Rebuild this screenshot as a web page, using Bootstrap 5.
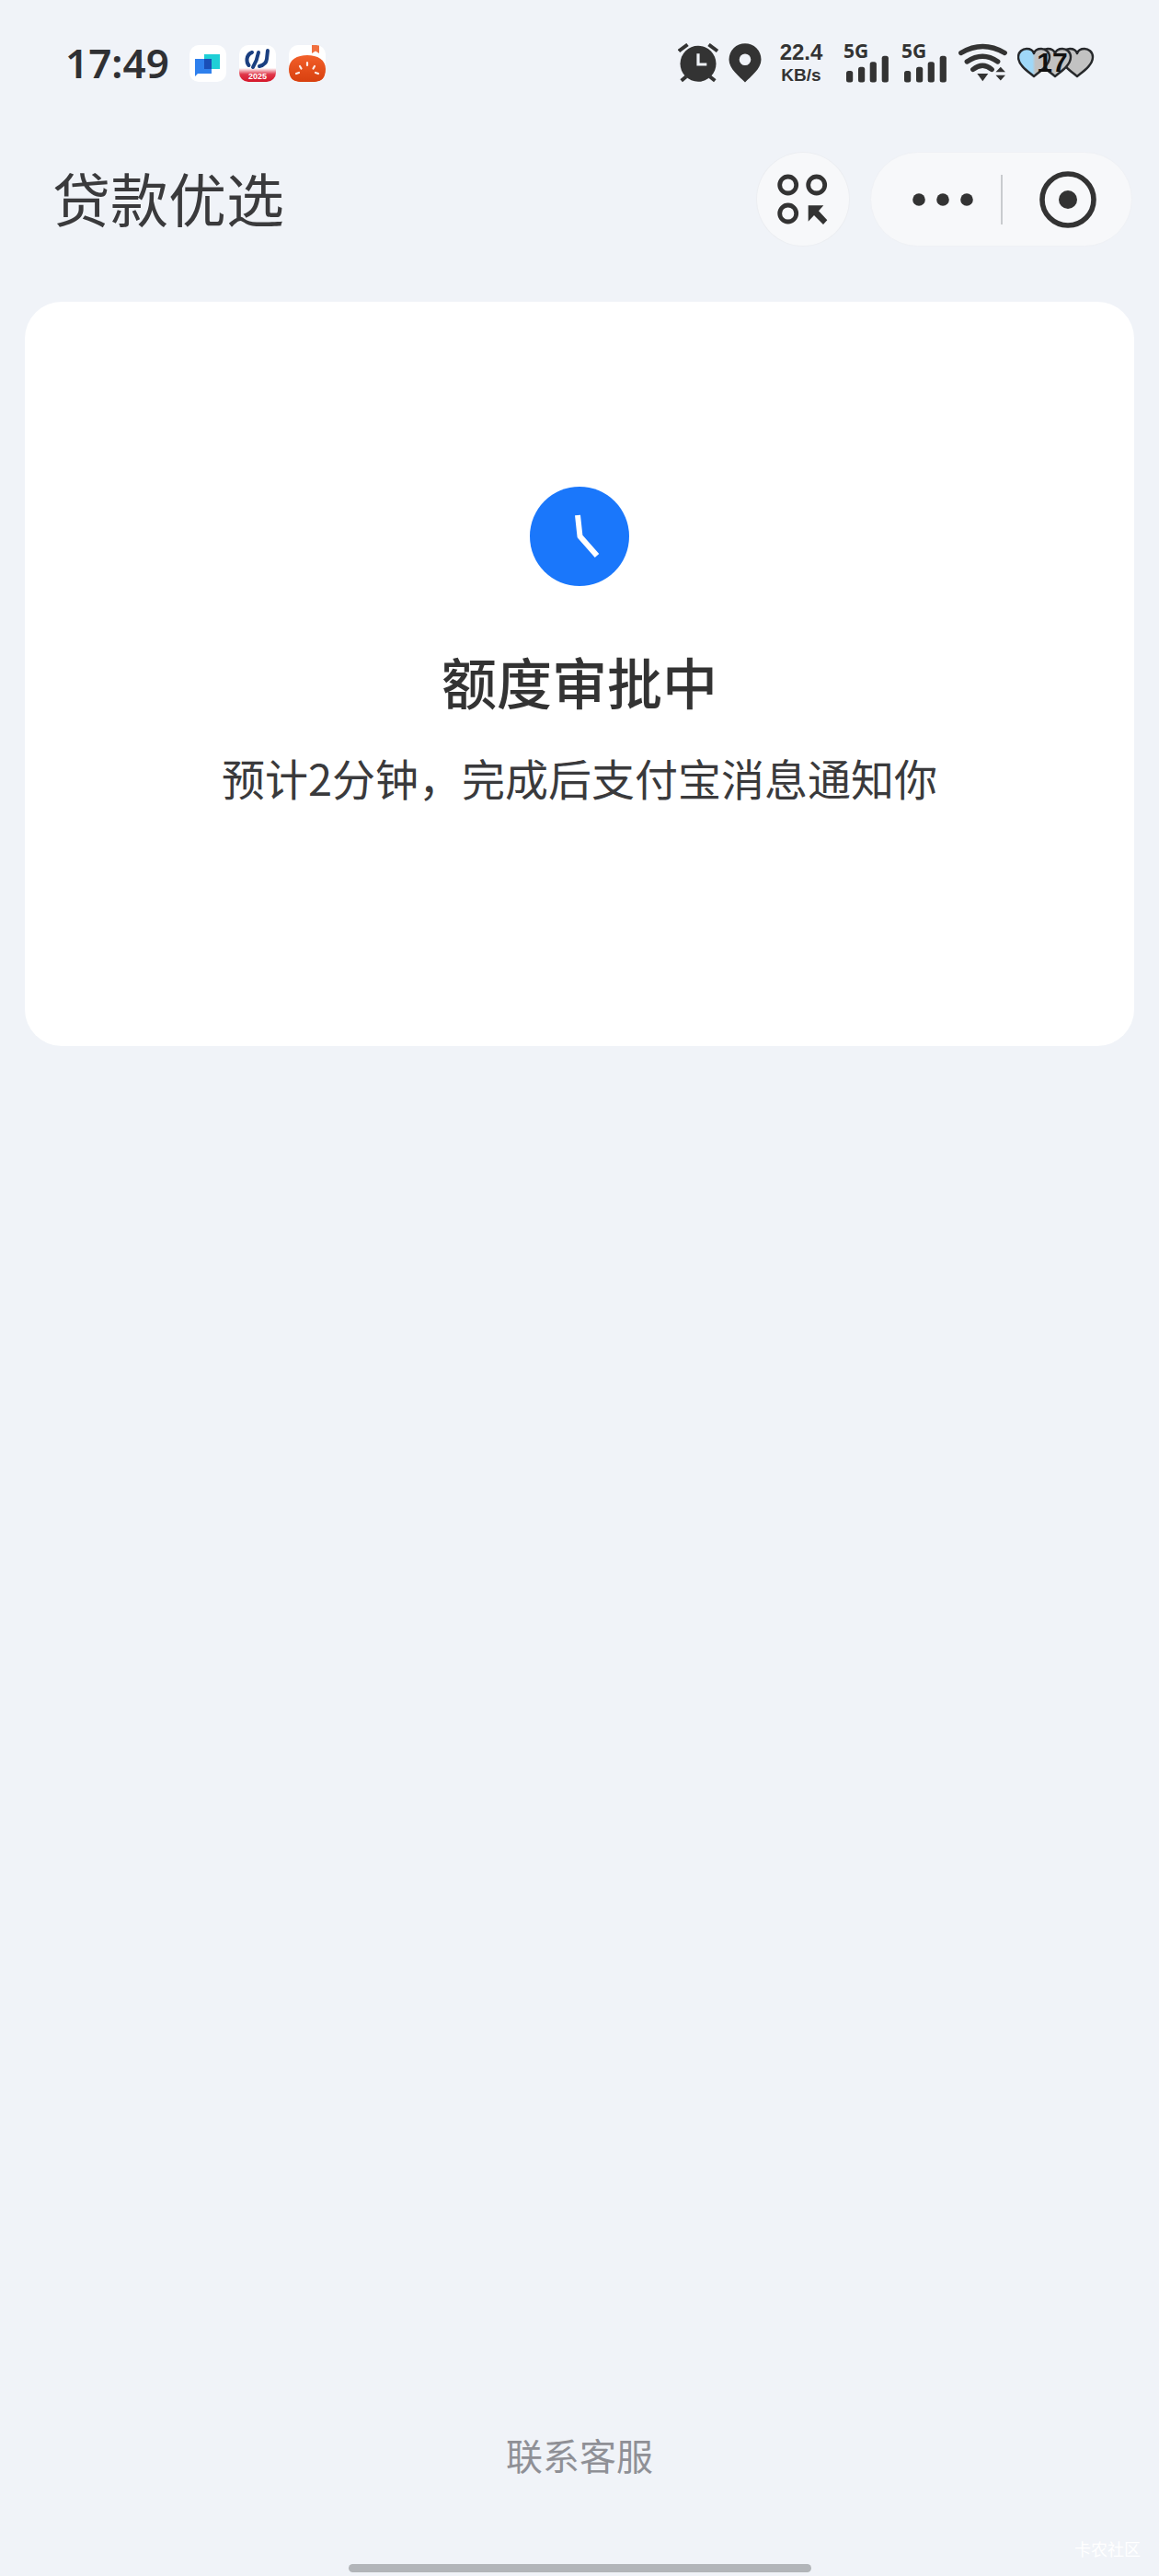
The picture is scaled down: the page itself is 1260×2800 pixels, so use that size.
<!DOCTYPE html>
<html lang="zh-CN">
<head>
  <meta charset="UTF-8" />
  <meta name="viewport" content="width=device-width, initial-scale=1.0"/>
  <title>贷款优选</title>
  <link href="https://cdn.jsdelivr.net/npm/bootstrap@5.3.0/dist/css/bootstrap.min.css" rel="stylesheet"/>
  <style>
    body {
      background: #f0f3f8;
      color: #333;
      font-family: "Noto Sans CJK SC", "Noto Sans", sans-serif;
    }
    .page-wrap { width: 1260px; height: 2800px; }

    /* status bar */
    .status-bar { height: 43px; margin-top: 47px; padding-left: 71px; }
    .clock-time { font: 600 44px/41px "Noto Sans", sans-serif; width: 115px; margin-right: 20px; color: #2f3033; }
    .app-icon { width: 40px; height: 40px; border-radius: 10px; background: #fff; margin-right: 14px; overflow: hidden; }
    .status-right { margin-left: auto; margin-right: 69px; width: 454px; color: #333; }
    .status-right svg { flex: none; }
    .ic-pin { margin-left: 10px; }
    .speed-box { width: 52px; margin-left: 17px; margin-right: 20px; font-family: "Liberation Sans", sans-serif; font-weight: 700; text-align: center; }
    .speed-num { font-size: 24px; line-height: 23px; }
    .speed-unit { font-size: 19px; line-height: 23px; margin-top: 2px; }
    .sig-box { width: 52px; height: 43px; flex: none; }
    .sig-label { display: block; font: 700 21px/17px "Noto Sans", sans-serif; margin-bottom: -4px; }
    .sig-bars { display: block; }
    .sig-two { margin-left: 11px; }
    .ic-wifi { margin-left: 10px; }
    .ic-hearts { margin-left: 11px; }

    /* mini program nav */
    .top-nav { height: 103px; margin-top: 75px; padding: 0 29px 0 57px; }
    .nav-title { font-size: 63px; line-height: 99px; font-weight: 400; color: #3a3a3c; margin: 0 0 6px; }
    .scan-btn { width: 102px; height: 103px; background: #f7f8fa; border: 1px solid #eceef2; margin-right: 22px; }
    .capsule-btn { width: 285px; height: 103px; background: #f7f8fa; border: 1px solid #eff1f5; }
    .dots-ic { margin-left: 45px; }
    .capsule-line { width: 1.5px; height: 54px; background: #c9cbce; margin-left: 30px; margin-right: 40px; }

    /* status card */
    .status-card { margin: 60px 27px 0; height: 809px; border-radius: 40px; background: #fff; padding-top: 201px; }
    .clock-ic { margin-bottom: 59px; }
    .card-head { font-size: 60px; line-height: 88px; font-weight: 500; color: #333; margin: 0 0 26px; }
    .card-sub { font-size: 47px; line-height: 70px; color: #3a3a3c; margin: 0; }

    .service-link { font-size: 40px; line-height: 60px; color: #8f9096; margin-bottom: 89px; }
    .home-bar { width: 503px; height: 9px; border-radius: 5px; background: #b2b5b9; margin-bottom: 4px; }
    .watermark { position: absolute; right: 20px; bottom: 20px; font-size: 18px; line-height: 20px; color: #fff; }
  </style>
</head>
<body>

<div class="page-wrap d-flex flex-column position-relative">

  <!-- Status bar -->
  <div class="status-bar d-flex align-items-center">
    <div class="clock-time">17:49</div>

    <div class="app-icon">
      <svg width="40" height="40" viewBox="0 0 40 40">
        <path d="M16 10h17v16h-3v-0H16z" fill="#1fcfd6"/>
        <path d="M6 15h18v16H9l-3 3z" fill="#2f80ed"/>
        <rect x="16" y="15" width="8" height="11" fill="#1a4fb8"/>
      </svg>
    </div>
    <div class="app-icon">
      <svg width="40" height="40" viewBox="0 0 40 40">
        <defs>
          <linearGradient id="bandRed" x1="0" y1="0" x2="0" y2="1">
            <stop offset="0" stop-color="#fff"/>
            <stop offset=".45" stop-color="#e0374a"/>
            <stop offset="1" stop-color="#d5162a"/>
          </linearGradient>
        </defs>
        <rect x="0" y="25" width="40" height="15" fill="url(#bandRed)"/>
        <g fill="none" stroke="#1b3f80" stroke-width="4" stroke-linecap="round">
          <path d="M14 8C11 9 9 12 8.500 15c-.3 3 0 5 2 7"/>
          <path d="M21 8c-1 6-3 11-6 16"/>
          <path d="M31 6l-1 9c-.5 5-4 7-8 8"/>
        </g>
        <text x="20" y="37" text-anchor="middle" font-size="9" font-weight="700" fill="#fff" font-family="Liberation Sans, sans-serif">2025</text>
      </svg>
    </div>
    <div class="app-icon">
      <svg width="40" height="40" viewBox="0 0 40 40">
        <defs>
          <linearGradient id="domeRed" x1="0" y1="0" x2="0" y2="1">
            <stop offset="0" stop-color="#f2602a"/>
            <stop offset="1" stop-color="#d8400f"/>
          </linearGradient>
        </defs>
        <path d="M25 0h8v9l-4-2.500L25 9z" fill="#f0703f"/>
        <path d="M0 26C0 16 9 11 20 11s20 5 20 15c0 9-4 14-12 14H12C4 40 0 35 0 26z" fill="url(#domeRed)"/>
        <g stroke="#fff" stroke-width="2.200" stroke-linecap="round" opacity=".9">
          <path d="M20 19v3"/><path d="M12 23l1.500 2.500"/><path d="M28 23l-1.500 2.500"/><path d="M8 31l3-1"/><path d="M32 31l-3-1"/>
        </g>
      </svg>
    </div>

    <div class="status-right d-flex align-items-center">
      <!-- alarm -->
      <svg width="45" height="43" viewBox="0 0 45 43">
        <circle cx="22" cy="22.300" r="19.500" fill="#333"/>
        <g stroke="#333" stroke-width="4" fill="none">
          <path d="M1 8.500 10.500 1.500"/><path d="M33.500 1.500 43 8.500"/>
          <path d="M3.700 40.700 9 36.300"/><path d="M40.300 40.700 34.700 36.300"/>
        </g>
        <path d="M22 11.300V23h9.300" stroke="#f0f3f8" stroke-width="3.200" fill="none"/>
      </svg>
      <!-- location -->
      <svg class="ic-pin" width="36" height="43" viewBox="0 0 36 43">
        <path fill-rule="evenodd" fill="#333" d="M18 42.500C12 36 .5 28 .5 17.700a17.500 17.500 0 0 1 35 0C35.500 28 24 36 18 42.500zM18 11.400a6.300 6.300 0 1 0 0 12.600 6.300 6.300 0 0 0 0-12.600z"/>
      </svg>
      <div class="speed-box">
        <div class="speed-num">22.4</div>
        <div class="speed-unit">KB/s</div>
      </div>
      <!-- signal 1 -->
      <div class="sig-box">
        <span class="sig-label">5G</span>
        <svg class="sig-bars" width="52" height="30" viewBox="0 13 52 30">
          <g fill="#333">
            <rect x="3" y="30" width="7.200" height="12.500" rx="2.500"/>
            <rect x="16" y="25.700" width="7.200" height="16.800" rx="2.500"/>
            <rect x="28.700" y="20.300" width="7.200" height="22.200" rx="2.500"/>
            <rect x="41.700" y="13.700" width="7.200" height="28.800" rx="2.500"/>
          </g>
        </svg>
      </div>
      <!-- signal 2 -->
      <div class="sig-box sig-two">
        <span class="sig-label">5G</span>
        <svg class="sig-bars" width="52" height="30" viewBox="0 13 52 30">
          <g fill="#333">
            <rect x="3" y="30" width="7.200" height="12.500" rx="2.500"/>
            <rect x="16" y="25.700" width="7.200" height="16.800" rx="2.500"/>
            <rect x="28.700" y="20.300" width="7.200" height="22.200" rx="2.500"/>
            <rect x="41.700" y="13.700" width="7.200" height="28.800" rx="2.500"/>
          </g>
        </svg>
      </div>
      <!-- wifi -->
      <svg class="ic-wifi" width="53" height="43" viewBox="0 0 53 43">
        <g fill="none" stroke="#333" stroke-width="5.400" stroke-linecap="round">
          <path d="M2.800 10.500Q26.300-3.500 50.200 10.500"/>
          <path d="M9.300 20Q26.300 8.500 42.700 20"/>
          <path d="M15.800 28.500Q26.300 20 36.200 28.500"/>
        </g>
        <path d="M20.300 33h12l-6 8.300z" fill="#333"/>
        <path d="M40.500 31.300h10.500l-5.200-5.500zM40.500 34.700h10.500l-5.200 5.800z" fill="#333"/>
      </svg>
      <!-- hearts -->
      <svg class="ic-hearts" width="85" height="43" viewBox="0 0 85 43">
        <defs>
          <linearGradient id="heartFill" x1="0" y1="0" x2="1" y2="0">
            <stop offset=".45" stop-color="#9fd8f8"/>
            <stop offset=".55" stop-color="#c2c2c2"/>
          </linearGradient>
          <path id="heartShape" d="M0 29C-6 24-17 17-17 8-17 2-12-1-8-1-4-1-1 1 0 4 1 1 4-1 8-1 12-1 17 2 17 8 17 17 6 24 0 29Z"/>
        </defs>
        <g stroke="#26282b" stroke-width="2.400" stroke-linejoin="round">
          <use href="#heartShape" x="65" y="7" fill="#c2c2c2"/>
          <use href="#heartShape" x="41" y="7" fill="#c2c2c2"/>
          <use href="#heartShape" x="18" y="7" fill="url(#heartFill)"/>
        </g>
        <text x="38" y="31" text-anchor="middle" font-size="30" font-weight="700" fill="#111" font-family="Liberation Sans, sans-serif">17</text>
      </svg>
    </div>
  </div>

  <!-- Nav -->
  <div class="top-nav d-flex align-items-center">
    <h1 class="nav-title me-auto">贷款优选</h1>
    <div class="scan-btn rounded-circle flex-shrink-0">
      <svg width="100" height="101" viewBox="0 0 100 101" class="d-block">
        <g fill="none" stroke="#333" stroke-width="4.800">
          <circle cx="33.700" cy="35" r="9"/>
          <circle cx="64.700" cy="35" r="9"/>
          <circle cx="33.700" cy="66" r="9"/>
        </g>
        <path d="M55.700 57.300H72.300L67 63.300 76.300 73.300 72 78 62 68 55.700 74.700z" fill="#333"/>
      </svg>
    </div>
    <div class="capsule-btn rounded-pill d-flex align-items-center flex-shrink-0">
      <svg class="dots-ic" width="66" height="14" viewBox="0 0 66 14">
        <circle cx="7" cy="7" r="6.800" fill="#333"/>
        <circle cx="33" cy="7" r="6.800" fill="#333"/>
        <circle cx="59" cy="7" r="6.800" fill="#333"/>
      </svg>
      <div class="capsule-line"></div>
      <svg width="62" height="62" viewBox="0 0 62 62">
        <circle cx="31" cy="31" r="28" fill="none" stroke="#333" stroke-width="5.600"/>
        <circle cx="31" cy="31" r="10" fill="#333"/>
      </svg>
    </div>
  </div>

  <!-- Card -->
  <div class="status-card card border-0 d-flex flex-column align-items-center text-center">
    <svg class="clock-ic" width="108" height="108" viewBox="0 0 108 108">
      <circle cx="54" cy="54" r="54" fill="#1a77fb"/>
      <path d="M52 31 54.500 54 73 75" fill="none" stroke="#fff" stroke-width="6" stroke-linejoin="round"/>
    </svg>
    <h2 class="card-head">额度审批中</h2>
    <p class="card-sub">预计2分钟，完成后支付宝消息通知你</p>
  </div>

  <!-- Bottom -->
  <div class="mt-auto d-flex flex-column align-items-center">
    <a class="service-link text-decoration-none" href="#">联系客服</a>
    <div class="home-bar"></div>
  </div>

  <div class="watermark">卡农社区</div>
</div>

<script src="https://cdn.jsdelivr.net/npm/bootstrap@5.3.0/dist/js/bootstrap.bundle.min.js"></script>
</body>
</html>
